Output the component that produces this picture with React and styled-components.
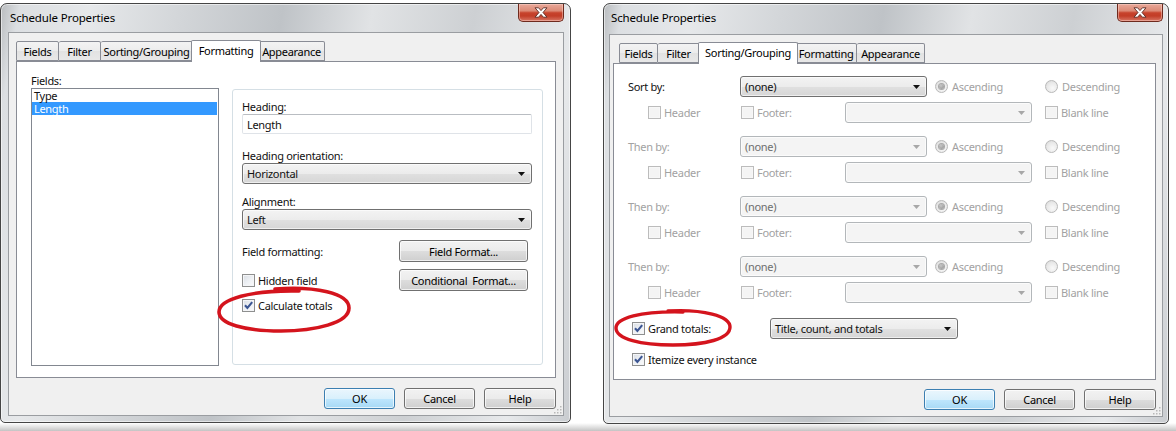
import React from 'react';
import styled, { createGlobalStyle } from 'styled-components';

const GlobalStyle = createGlobalStyle`
  html, body { margin: 0; padding: 0; }
  body {
    width: 1176px;
    height: 431px;
    overflow: hidden;
    background: linear-gradient(to bottom, #ffffff 0, #ffffff 423px, #c4c4c4 431px);
    font-family: "Noto Sans", "Open Sans", sans-serif;
    font-size: 11px;
    letter-spacing: -0.3px;
    color: #111;
  }
`;

const Page = styled.div`
  display: flex;
  align-items: flex-start;
  gap: 32px;
  padding-top: 3px;
`;

const Window = styled.div`
  box-sizing: border-box;
  width: ${p => p.$w}px;
  height: ${p => p.$h}px;
  border: 1px solid #454545;
  border-radius: 7px 7px 5px 5px;
  padding: 0 ${p => p.$fr}px ${p => p.$fb}px ${p => p.$fl}px;
  display: flex;
  flex-direction: column;
  background: linear-gradient(100deg, #b9bcbf 0%, #dcdfe2 3%, #e6e8ea 14%, #d3d6d9 28%, #bfc3c7 44%, #e1e3e5 58%, #cdd0d3 74%, #e7e9eb 90%, #c9ccd0 100%);
  box-shadow: inset 0 0 0 1px rgba(255, 255, 255, 0.55);
`;

const TitleBar = styled.div`
  flex: 0 0 ${p => p.$h}px;
  display: flex;
  justify-content: space-between;
  align-items: flex-start;
`;

const Title = styled.div`
  margin: 6px 0 0 2px;
  font-size: 11.5px;
  letter-spacing: -0.15px;
  line-height: 15px;
  color: #000;
`;

const CloseButton = styled.div`
  box-sizing: border-box;
  width: 46px;
  height: 18px;
  display: flex;
  align-items: center;
  justify-content: center;
  border: 1px solid #6e2a1e;
  border-top: none;
  border-radius: 0 0 5px 5px;
  background: linear-gradient(#e9a899 0%, #dc8a76 40%, #c7432c 52%, #c23d27 70%, #d77563 100%);
  box-shadow: inset 0 0 0 1px rgba(255, 220, 210, 0.45);
`;

const Client = styled.div`
  position: relative;
  flex: 1;
  display: flex;
  flex-direction: column;
  border: 1px solid #9a9da1;
  background: #f0f0f0;
  padding: 7px ${p => p.$pr}px 0 ${p => p.$pl}px;
`;

const TabStrip = styled.div`
  position: relative;
  z-index: 1;
  height: 21px;
  display: flex;
  align-items: flex-end;
  padding-left: ${p => p.$offset}px;
`;

const Tab = styled.div`
  box-sizing: border-box;
  width: ${p => p.$w + (p.$active ? 4 : 0)}px;
  height: ${p => (p.$active ? 22 : 20)}px;
  margin: ${p => (p.$active ? '0 -2px -1px -2px' : '0')};
  position: relative;
  z-index: ${p => (p.$active ? 2 : 1)};
  border: 1px solid #898c95;
  border-bottom: ${p => (p.$active ? 'none' : '1px solid #898c95')};
  border-left-width: ${p => (p.$first || p.$active ? 1 : 0)}px;
  border-radius: 2px 2px 0 0;
  background: ${p => (p.$active ? '#ffffff' : 'linear-gradient(#f3f3f3, #ececec 50%, #e2e2e2 51%, #e8e8e8)')};
  display: flex;
  justify-content: center;
  align-items: ${p => (p.$active ? 'flex-start' : 'center')};
  padding-top: ${p => (p.$active ? 2 : 0)}px;
  line-height: 15px;
  color: #000;
  white-space: nowrap;
`;

const Panel = styled.div`
  position: relative;
  box-sizing: border-box;
  height: 317px;
  background: #fff;
  border: 1px solid #898c95;
`;

const ButtonRow = styled.div`
  display: flex;
  justify-content: flex-end;
  gap: 9px;
  margin-top: ${p => p.$mt}px;
`;

const PushButton = styled.div`
  box-sizing: border-box;
  width: ${p => p.$w}px;
  height: ${p => p.$h || 21}px;
  display: flex;
  align-items: center;
  justify-content: center;
  border: 1px solid ${p => (p.$default ? '#3c7fb1' : '#707070')};
  border-radius: 3px;
  background: ${p =>
    p.$default
      ? 'linear-gradient(#eaf6fd 0%, #d9f0fc 50%, #bee6fd 51%, #a7d9f5 100%)'
      : 'linear-gradient(#f2f2f2 0%, #ebebeb 50%, #dddddd 51%, #cfcfcf 100%)'};
  box-shadow: inset 0 0 0 1px rgba(255, 255, 255, 0.7);
  color: #000;
  white-space: pre;
`;

const Grip = styled.svg`
  position: absolute;
  right: 1px;
  bottom: 1px;
`;

const Annotation = styled.svg`
  position: absolute;
  left: ${p => p.$x}px;
  top: ${p => p.$y}px;
  overflow: visible;
  pointer-events: none;
`;

/* ---------- form parts ---------- */

const Label = styled.div`
  line-height: 15px;
  margin-top: ${p => p.$mt || 0}px;
  color: ${p => (p.$disabled ? '#a2a2a2' : '#111')};
  white-space: nowrap;
`;

const TextInput = styled.div`
  box-sizing: border-box;
  height: 20px;
  display: flex;
  align-items: center;
  padding-left: 4px;
  border: 1px solid #dfe3e8;
  border-top-color: #b9bdc2;
  border-radius: 2px;
  background: #fff;
  color: #111;
`;

const SelectBox = styled.div`
  box-sizing: border-box;
  width: ${p => (p.$w ? `${p.$w}px` : '100%')};
  flex: 0 0 auto;
  height: 21px;
  display: flex;
  align-items: center;
  justify-content: space-between;
  padding: 0 6px 0 4px;
  border: 1px solid ${p => (p.$disabled ? '#b3b7ba' : '#707070')};
  border-radius: 3px;
  background: ${p =>
    p.$disabled ? '#f4f4f4' : 'linear-gradient(#f3f3f3 0%, #ececec 50%, #e0e0e0 51%, #d6d6d6 100%)'};
  box-shadow: inset 0 0 0 1px rgba(255, 255, 255, 0.6);
  color: ${p => (p.$disabled ? '#6f6f6f' : '#111')};
  white-space: nowrap;
`;

const CheckItem = styled.div`
  display: inline-flex;
  align-items: center;
  gap: 3px;
  line-height: 15px;
  color: ${p => (p.$disabled ? '#a2a2a2' : '#111')};
  white-space: nowrap;
`;

const Box = styled.span`
  box-sizing: border-box;
  flex: 0 0 13px;
  width: 13px;
  height: 13px;
  display: flex;
  border: 1px solid ${p => (p.$disabled ? '#bcbcbc' : '#8e8f8f')};
  background: ${p => (p.$disabled ? '#f4f4f4' : 'linear-gradient(135deg, #d9dde3 0%, #eef1f5 55%, #fbfbfb 100%)')};
  box-shadow: inset 0 0 0 1px ${p => (p.$disabled ? '#f7f7f7' : '#f4f5f7')};
`;

const RadioCircle = styled.span`
  box-sizing: border-box;
  flex: 0 0 13px;
  width: 13px;
  height: 13px;
  border-radius: 50%;
  border: 1px solid #b9b9b9;
  background: radial-gradient(circle at 60% 65%, #f9f9f9 0%, #e9e9e9 55%, #d3d3d3 100%);
  display: flex;
  align-items: center;
  justify-content: center;
`;

const RadioDot = styled.span`
  width: 5px;
  height: 5px;
  border-radius: 50%;
  background: radial-gradient(circle at 40% 35%, #c8c8c8, #8d8d8d);
  box-shadow: 0 0 0 1px #a9a9a9;
`;

const ArrowIcon = ({ disabled }) => (
  <svg width="7" height="4" viewBox="0 0 7 4">
    <polygon points="0,0 7,0 3.5,4" fill={disabled ? '#a7a7a7' : '#111'} />
  </svg>
);

const Select = ({ children, w, disabled }) => (
  <SelectBox $w={w} $disabled={disabled}>
    <span>{children}</span>
    <ArrowIcon disabled={disabled} />
  </SelectBox>
);

const Check = ({ checked, disabled, children }) => (
  <CheckItem $disabled={disabled}>
    <Box $disabled={disabled}>
      {checked && (
        <svg width="11" height="11" viewBox="0 0 11 11">
          <polyline points="2,5.3 4.4,8 9.2,2.2" fill="none" stroke="#3b5592" strokeWidth="2.1" />
        </svg>
      )}
    </Box>
    <span>{children}</span>
  </CheckItem>
);

const Radio = ({ checked, children }) => (
  <CheckItem $disabled>
    <RadioCircle>{checked && <RadioDot />}</RadioCircle>
    <span style={{ marginLeft: 1 }}>{children}</span>
  </CheckItem>
);

/* ---------- formatting tab ---------- */

const FormatGrid = styled.div`
  box-sizing: border-box;
  height: 100%;
  display: grid;
  grid-template-columns: 188px 311px;
  column-gap: 13px;
  padding: 11px 11px 11px 14px;
`;

const FieldsColumn = styled.div`
  display: flex;
  flex-direction: column;
`;

const ListBox = styled.div`
  flex: 1;
  box-sizing: border-box;
  border: 1px solid #828790;
  background: #fff;
`;

const ListItem = styled.div`
  line-height: 13px;
  padding-left: 2px;
  margin-right: 1px;
  background: ${p => (p.$selected ? '#3399ff' : 'transparent')};
  color: ${p => (p.$selected ? '#fff' : '#111')};
`;

const GroupBox = styled.div`
  margin: 16px 0 1px;
  box-sizing: border-box;
  border: 1px solid #d5dfe5;
  border-radius: 3px;
  padding: 9px 10px 0 9px;
  display: flex;
  flex-direction: column;
`;

const OptionGrid = styled.div`
  margin-top: 10px;
  display: grid;
  grid-template-columns: 157px 129px;
  grid-auto-rows: 22px 22px 15px;
  row-gap: 7px;
  align-items: center;
`;

function FormattingContent() {
  return (
    <FormatGrid>
      <FieldsColumn>
        <Label>Fields:</Label>
        <ListBox>
          <ListItem>Type</ListItem>
          <ListItem $selected>Length</ListItem>
        </ListBox>
      </FieldsColumn>
      <GroupBox>
        <Label>Heading:</Label>
        <TextInput>Length</TextInput>
        <Label $mt={14}>Heading orientation:</Label>
        <Select>Horizontal</Select>
        <Label $mt={10}>Alignment:</Label>
        <Select>Left</Select>
        <OptionGrid>
          <Label>Field formatting:</Label>
          <PushButton $w={129} $h={22}>Field Format...</PushButton>
          <Check>Hidden field</Check>
          <PushButton $w={129} $h={22}>{'Conditional  Format...'}</PushButton>
          <Check checked>Calculate totals</Check>
        </OptionGrid>
      </GroupBox>
    </FormatGrid>
  );
}

/* ---------- sorting tab ---------- */

const SortContent = styled.div`
  padding: 12px 14px;
  display: flex;
  flex-direction: column;
`;

const SortGroups = styled.div`
  display: flex;
  flex-direction: column;
  gap: 13px;
`;

const SortGroup = styled.div`
  display: flex;
  flex-direction: column;
  gap: 5px;
`;

const Row = styled.div`
  display: flex;
  align-items: center;
  height: 21px;
  margin-top: ${p => p.$mt || 0}px;
`;

const Cell = styled.div`
  box-sizing: border-box;
  flex: 0 0 ${p => p.$w}px;
  display: flex;
  align-items: center;
  padding-left: ${p => p.$pl || 0}px;
  margin-left: ${p => p.$ml || 0}px;
`;

const sortLevels = [
  { label: 'Sort by:', enabled: true },
  { label: 'Then by:' },
  { label: 'Then by:' },
  { label: 'Then by:' },
];

function SortingContent() {
  return (
    <SortContent>
      <SortGroups>
        {sortLevels.map((lvl, i) => (
          <SortGroup key={i}>
            <Row>
              <Cell $w={112}>
                <Label $disabled={!lvl.enabled}>{lvl.label}</Label>
              </Cell>
              <Select w={187} disabled={!lvl.enabled}>(none)</Select>
              <Cell $w={110} $ml={8}>
                <Radio checked>Ascending</Radio>
              </Cell>
              <Cell $w={110}>
                <Radio>Descending</Radio>
              </Cell>
            </Row>
            <Row>
              <Cell $w={113} $pl={20}>
                <Check disabled>Header</Check>
              </Cell>
              <Cell $w={104}>
                <Check disabled>Footer:</Check>
              </Cell>
              <Select w={187} disabled />
              <Cell $w={110} $ml={13}>
                <Check disabled>Blank line</Check>
              </Cell>
            </Row>
          </SortGroup>
        ))}
      </SortGroups>
      <Row $mt={15}>
        <Cell $w={142} $pl={4}>
          <Check checked>Grand totals:</Check>
        </Cell>
        <Select w={188}>Title, count, and totals</Select>
      </Row>
      <Row $mt={10}>
        <Cell $w={200} $pl={4}>
          <Check checked>Itemize every instance</Check>
        </Cell>
      </Row>
    </SortContent>
  );
}

/* ---------- dialog ---------- */

const CloseGlyph = () => (
  <svg width="14" height="11" viewBox="0 0 14 11">
    <polygon
      points="1,0.8 4.6,0.8 7,3.6 9.4,0.8 13,0.8 9,5.5 13,10.2 9.4,10.2 7,7.4 4.6,10.2 1,10.2 5,5.5"
      fill="#ffffff"
      stroke="#5b2a22"
      strokeWidth="0.9"
      strokeLinejoin="round"
    />
  </svg>
);

const GripIcon = () => (
  <Grip width="10" height="10" viewBox="0 0 10 10">
    {[[8, 2], [8, 5], [5, 5], [8, 8], [5, 8], [2, 8]].map(([x, y], i) => (
      <rect key={i} x={x} y={y} width="1.5" height="1.5" fill="#b8b8b8" />
    ))}
  </Grip>
);

function Dialog({ geo, tabs, children, overlay }) {
  return (
    <Window $w={geo.w} $h={geo.h} $fl={geo.fl} $fr={geo.fr} $fb={geo.fb}>
      <TitleBar $h={geo.titleH}>
        <Title>Schedule Properties</Title>
        <CloseButton>
          <CloseGlyph />
        </CloseButton>
      </TitleBar>
      <Client $pl={geo.pl} $pr={geo.pr}>
        <TabStrip $offset={geo.tabOffset}>
          {tabs.map((t, i) => (
            <Tab key={t.label} $w={t.w} $active={t.active} $first={i === 0}>
              {t.label}
            </Tab>
          ))}
        </TabStrip>
        <Panel>
          {children}
          {overlay}
        </Panel>
        <ButtonRow $mt={geo.btnTop}>
          <PushButton $w={71} $default>OK</PushButton>
          <PushButton $w={71}>Cancel</PushButton>
          <PushButton $w={72}>Help</PushButton>
        </ButtonRow>
        <GripIcon />
      </Client>
    </Window>
  );
}

const leftTabs = [
  { label: 'Fields', w: 43 },
  { label: 'Filter', w: 42 },
  { label: 'Sorting/Grouping', w: 92 },
  { label: 'Formatting', w: 66, active: true },
  { label: 'Appearance', w: 66 },
];

const rightTabs = [
  { label: 'Fields', w: 39 },
  { label: 'Filter', w: 42 },
  { label: 'Sorting/Grouping', w: 96, active: true },
  { label: 'Formatting', w: 61 },
  { label: 'Appearance', w: 68 },
];

const leftGeo = { w: 571, h: 420, fl: 7, fr: 6, fb: 6, titleH: 28, pl: 7, pr: 7, tabOffset: 0, btnTop: 10 };
const rightGeo = { w: 566, h: 421, fl: 5, fr: 5, fb: 6, titleH: 30, pl: 3, pr: 6, tabOffset: 6, btnTop: 9 };

const RED = '#d4141d';

const LeftMark = (
  <Annotation $x={198} $y={222} width="140" height="54" viewBox="0 0 140 54">
    <path
      d="M60 5 C100 2 134 9 134 24 C134 39 100 47 66 47 C30 47 4 40 4 28 C4 15 36 6 84 7"
      fill="none"
      stroke={RED}
      strokeWidth="3.6"
      strokeLinecap="round"
    />
  </Annotation>
);

const RightMark = (
  <Annotation $x={-1} $y={243} width="122" height="42" viewBox="0 0 122 42">
    <path
      d="M55 4 C90 2 117 9 117 20 C117 32 92 38 60 38 C28 38 3 32 3 21 C3 11 27 4 70 5"
      fill="none"
      stroke={RED}
      strokeWidth="3.4"
      strokeLinecap="round"
    />
  </Annotation>
);

export default function App() {
  return (
    <>
      <GlobalStyle />
      <Page>
        <Dialog geo={leftGeo} tabs={leftTabs} overlay={LeftMark}>
          <FormattingContent />
        </Dialog>
        <Dialog geo={rightGeo} tabs={rightTabs} overlay={RightMark}>
          <SortingContent />
        </Dialog>
      </Page>
    </>
  );
}
